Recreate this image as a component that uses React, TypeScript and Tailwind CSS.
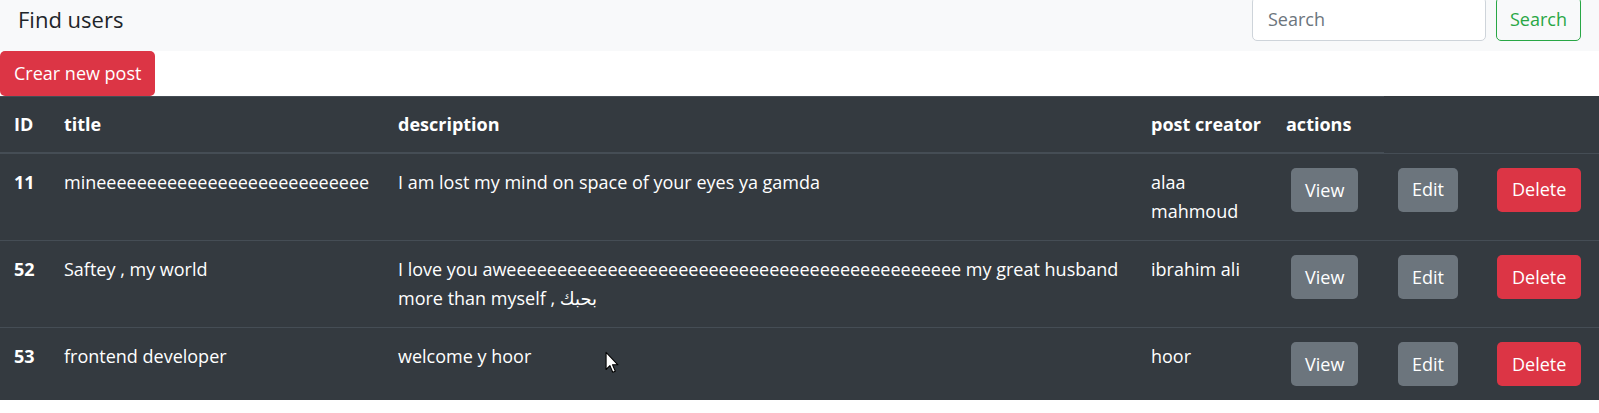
const posts = [
  {
    id: 11,
    title: 'min' + 'e'.repeat(27),
    description: 'I am lost my mind on space of your eyes ya gamda',
    creator: 'alaa mahmoud',
  },
  {
    id: 52,
    title: 'Saftey , my world',
    description: 'I love you aw' + 'e'.repeat(45) + ' my great husband more than myself , بحبك',
    creator: 'ibrahim ali',
  },
  {
    id: 53,
    title: 'frontend developer',
    description: 'welcome y hoor',
    creator: 'hoor',
  },
];

const font = { fontFamily: '"Open Sans", "DejaVu Sans", sans-serif' };

const App = () => {
  return (
    <div className="relative bg-white" style={font}>
      {/* navbar */}
      <nav className="-mt-[13px] flex h-[64px] items-center justify-between bg-[#f8f9fa] px-[18px]">
        <span className="text-[22px] leading-[34px] text-[#212529]">Find users</span>
        <form className="flex items-center gap-[10px]">
          <input
            type="text"
            placeholder="Search"
            className="h-[44px] w-[234px] rounded-[5px] border border-[#ced4da] bg-white px-[15px] text-[18px] text-[#495057] placeholder:text-[#6c757d] outline-none"
          />
          <button
            type="button"
            className="h-[44px] rounded-[5px] border border-[#28a745] px-[13px] text-[18px] text-[#28a745]"
          >
            Search
          </button>
        </form>
      </nav>

      <button className="h-[45px] rounded-[5px] bg-[#dc3545] px-[14px] text-[18px] text-white">
        Crear new post
      </button>

      {/* posts table */}
      <table className="w-full table-fixed border-collapse bg-[#343a40] text-[18px] leading-[29px] text-white">
        <colgroup>
          <col className="w-[50px]" />
          <col className="w-[334px]" />
          <col className="w-[753px]" />
          <col className="w-[135px]" />
          <col className="w-[112px]" />
          <col className="w-[99px]" />
          <col />
        </colgroup>
        <thead>
          <tr>
            {['ID', 'title', 'description', 'post creator', 'actions'].map((h) => (
              <th
                key={h}
                className="whitespace-nowrap border-t border-b-2 border-[#454d55] px-[14px] py-[13px] text-left align-bottom font-bold"
              >
                {h}
              </th>
            ))}
          </tr>
        </thead>
        <tbody>
          {posts.map((p) => (
            <tr key={p.id}>
              <td className="border-t border-[#454d55] px-[14px] py-[14px] align-top font-bold">{p.id}</td>
              <td className="border-t border-[#454d55] px-[14px] py-[14px] align-top">{p.title}</td>
              <td className="border-t border-[#454d55] px-[14px] py-[14px] align-top">{p.description}</td>
              <td className="border-t border-[#454d55] px-[14px] py-[14px] align-top">{p.creator}</td>
              <td className="border-t border-[#454d55] px-[19px] py-[14px] align-top">
                <button className="h-[44px] rounded-[5px] bg-[#6c757d] px-[14px] text-white">View</button>
              </td>
              <td className="border-t border-[#454d55] px-[14px] py-[14px] align-top">
                <button className="h-[44px] rounded-[5px] bg-[#6c757d] px-[14px] text-white">Edit</button>
              </td>
              <td className="border-t border-[#454d55] px-[14px] py-[14px] align-top">
                <button className="h-[44px] rounded-[5px] bg-[#dc3545] px-[15px] text-white">Delete</button>
              </td>
            </tr>
          ))}
        </tbody>
      </table>

      {/* mouse pointer over the page */}
      <svg className="absolute left-[605px] top-[364px]" width="14" height="23" viewBox="0 0 13 21">
        <path
          d="M1 1 L1 17 L4.6 13.4 L7.2 19.6 L9.6 18.6 L7 12.6 L12 12.6 Z"
          fill="#ffffff"
          stroke="#000000"
          strokeWidth="1"
          strokeLinejoin="round"
        />
      </svg>
    </div>
  );
};

export default App;
